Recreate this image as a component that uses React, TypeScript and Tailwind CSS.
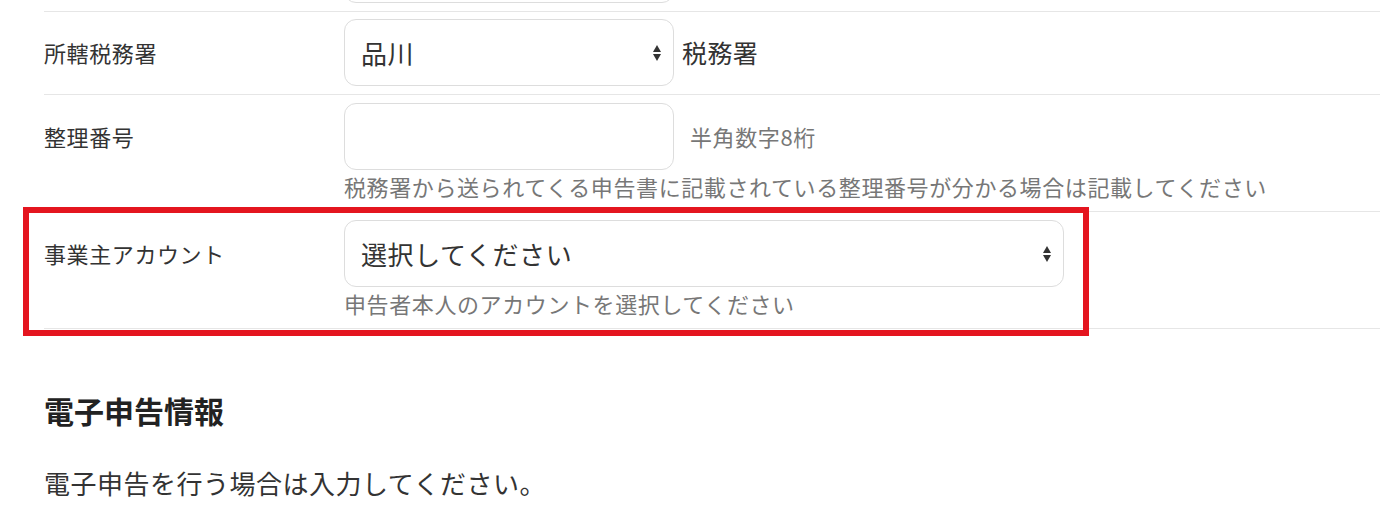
import React from 'react'

const font = { fontFamily: '"Noto Sans CJK JP", "Noto Sans", sans-serif' }

function Arrows() {
  return (
    <svg width="8" height="16" viewBox="0 0 8 16" className="shrink-0">
      <path d="M4 0 L8 7 L0 7 Z" fill="#333" />
      <path d="M0 9 L8 9 L4 16 Z" fill="#333" />
    </svg>
  )
}

function SelectBox({ value, width }: { value: string; width: string }) {
  return (
    <div
      className={`${width} h-[67px] flex items-center justify-between pl-4 pr-3 rounded-xl border border-[#dddddd] bg-white`}
    >
      <span className="text-[26px] leading-none tracking-[0.6px] text-[#333]">{value}</span>
      <Arrows />
    </div>
  )
}

function Label({ children }: { children: React.ReactNode }) {
  return (
    <div className="w-[300px] h-[67px] shrink-0 flex items-center text-[22px] tracking-[0.6px] text-[#333]">
      {children}
    </div>
  )
}

function Help({ children }: { children: React.ReactNode }) {
  return <p className="text-[22px] leading-[33px] tracking-[0.6px] text-[#777]">{children}</p>
}

export default function App() {
  return (
    <div className="relative w-[1380px] h-[530px] overflow-hidden bg-white" style={font}>
      <div className="pl-[44px]">
        {/* tail of previous row */}
        <div className="h-[12px] overflow-hidden flex flex-col justify-end border-b border-[#e6e6e6]">
          <div className="ml-[300px] mb-[8px] w-[330px] h-[67px] shrink-0 rounded-xl border border-[#dddddd]" />
        </div>

        <div className="flex pt-[7px] pb-2 border-b border-[#e6e6e6]">
          <Label>所轄税務署</Label>
          <div className="flex items-center gap-[8px]">
            <SelectBox value="品川" width="w-[330px]" />
            <span className="text-[25px] tracking-[0.4px] text-[#333]">税務署</span>
          </div>
        </div>

        <div className="flex py-2 border-b border-[#e6e6e6]">
          <Label>整理番号</Label>
          <div>
            <div className="flex items-center">
              <div className="w-[330px] h-[67px] rounded-xl border border-[#dddddd]" />
              <span className="ml-[16px] text-[22px] tracking-[0.6px] text-[#777]">半角数字8桁</span>
            </div>
            <Help>税務署から送られてくる申告書に記載されている整理番号が分かる場合は記載してください</Help>
          </div>
        </div>

        <div className="flex py-2 border-b border-[#e6e6e6]">
          <Label>事業主アカウント</Label>
          <div>
            <SelectBox value="選択してください" width="w-[720px]" />
            <Help>申告者本人のアカウントを選択してください</Help>
          </div>
        </div>

        <h2 className="mt-[59px] text-[30px] leading-[45px] font-bold text-[#222]">電子申告情報</h2>
        <p className="mt-[31px] text-[26px] leading-[37px] tracking-[0.5px] text-[#333]">
          電子申告を行う場合は入力してください。
        </p>
      </div>

      {/* annotation frame */}
      <div className="absolute left-[23px] top-[207px] w-[1066px] h-[129px] border-[6px] border-[#e4151f] pointer-events-none" />
    </div>
  )
}
